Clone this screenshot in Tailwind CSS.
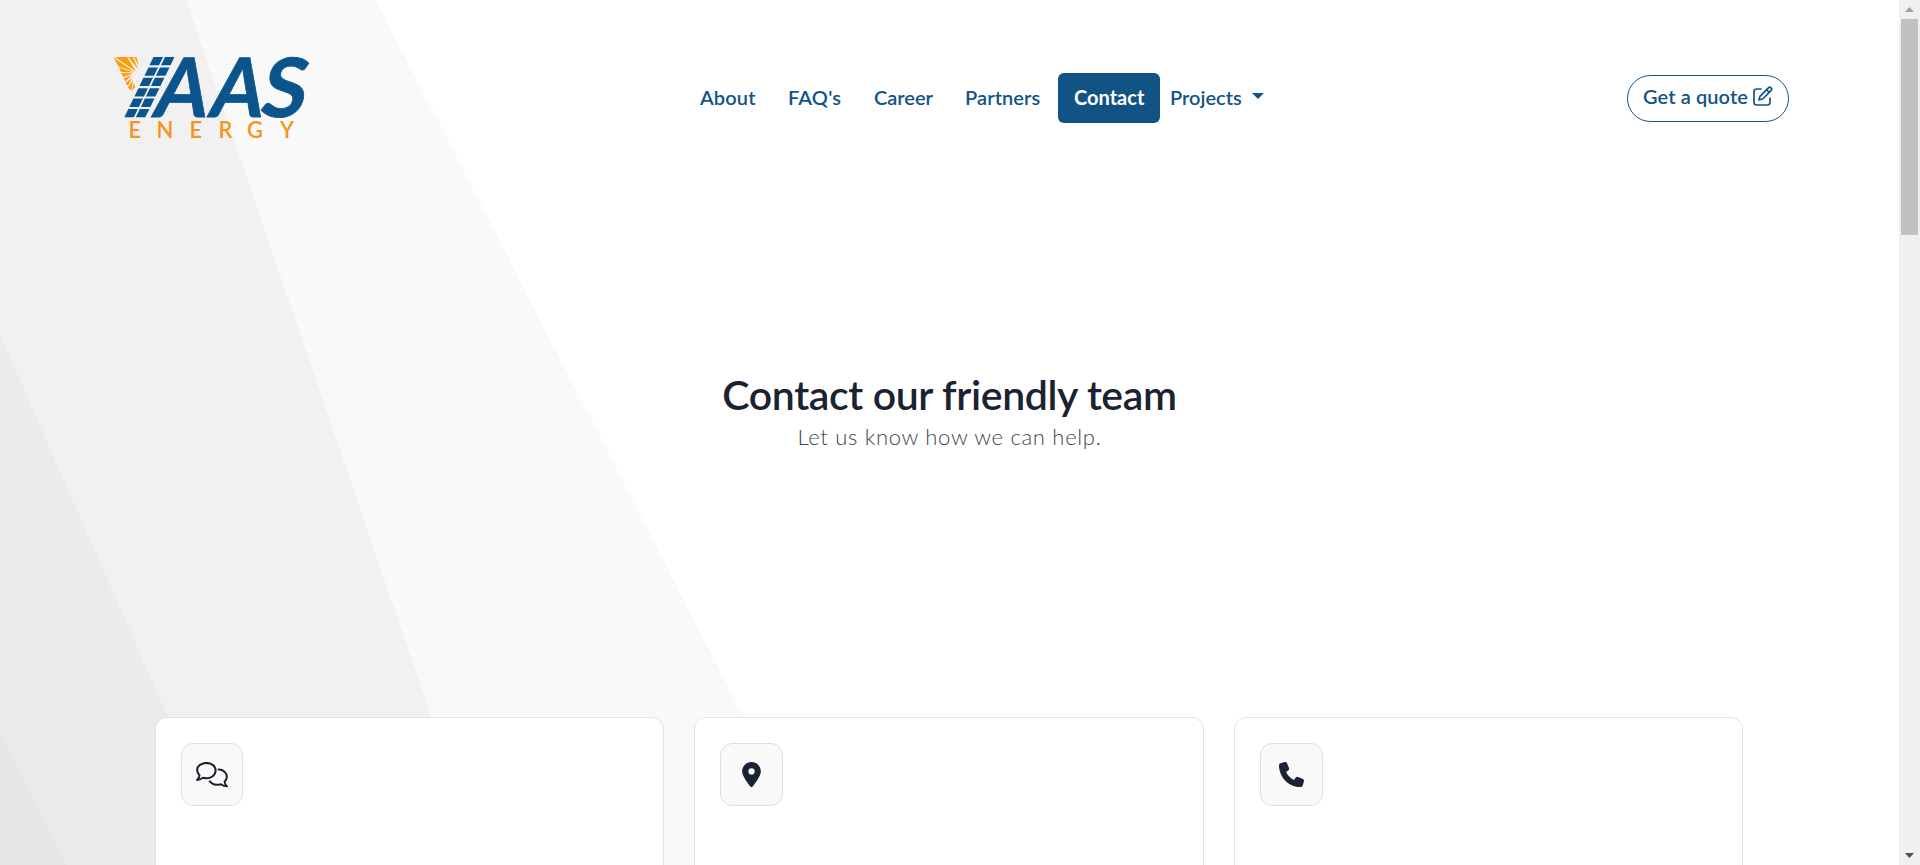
<!DOCTYPE html>
<html lang="en">
<head>
<meta charset="utf-8">
<title>YAAS Energy - Contact</title>
<script src="https://cdn.jsdelivr.net/npm/@tailwindcss/browser@4"></script>
</head>
<body class="flex h-[865px] w-[1920px] overflow-hidden bg-white font-[Lato,sans-serif]">
<div class="relative flex h-[865px] w-[1899px] flex-col overflow-hidden">
  <svg class="absolute inset-0 -z-10" width="1899" height="865" viewBox="0 0 1899 865">
    <path fill="#f9f9f9" d="M0 0H376L820 865H0z"/>
    <path fill="#f1f1f1" d="M0 0H186L482 865H0z"/>
    <path fill="#ebebeb" d="M0 335L233 865H0z"/>
    <path fill="#e5e5e5" d="M0 731L67 865H0z"/>
  </svg>

  <header class="flex h-[196px] items-center pr-[110px] pl-[110px]">
    <svg class="shrink-0" width="224" height="160" viewBox="110 18 224 160">
      <g fill="#fb9d0c">
        <path d="M128 57H133L138.500 69.500z"/>
        <path d="M115 57H127L136 71.500z"/>
        <path d="M113.500 57.500L134.500 72L118.500 66.500z"/>
        <path d="M119 67.500L133.500 72.500L121 72z"/>
        <path d="M121 73L133 73.500L123.500 77z"/>
        <path d="M123.500 78.500L132 75L125.500 81.500z"/>
        <path d="M125.500 83L132 77.500L128 86z"/>
        <path d="M128 87.500L133 80L131.500 91z"/>
        <path d="M132 90.500L134 83L135 87.500z"/>
        <path d="M134 57H136.500L139 66z"/>
      </g>
      <g fill="#0b558c" transform="translate(153.500 57) skewX(-25.8)">
        <path d="M0 0h9.500v8.300H0zM11.500 0h9.500v8.300h-9.500zM0 10.400h9.500v8.300H0zM11.500 10.400h9.500v8.300h-9.500zM0 20.800h9.500v8.300H0zM11.500 20.800h9.500v8.300h-9.500zM0 31.200h9.500v8.300H0zM11.500 31.200h9.500v8.300h-9.500zM0 41.600h9.500v8.300H0zM11.500 41.600h9.500v8.300h-9.500zM0 52h9.500v8.300H0zM11.500 52h9.500v8.300h-9.500z"/>
      </g>
      <g class="fill-[#0b558c] stroke-[#0b558c] stroke-[0.8px] font-[Lato,sans-serif] text-[82px] font-bold" transform="translate(0 117) skewX(-10.5)">
        <text transform="scale(.93 1)" x="162.900 222.800" y="-0.500">AA</text>
        <text x="258" y="-0.500">S</text>
      </g>
      <text x="128.500 156.500 189.500 218.500 247 280" y="137.600" class="fill-[#f7941e] font-[Lato,sans-serif] text-[22px] font-semibold">ENERGY</text>
    </svg>

    <nav class="ml-[350px] flex h-[50px] items-center text-[20px] leading-[48px] font-semibold whitespace-nowrap text-[#125386]">
      <a class="h-[50px] w-[72px] pl-4 tracking-[0.15px]">About</a>
      <a class="ml-4 h-[50px] w-[70px] pl-4 tracking-[0.2px]">FAQ's</a>
      <a class="ml-4 h-[50px] w-[75px] pl-4">Career</a>
      <a class="ml-4 h-[50px] w-[93px] pl-4 tracking-[0.1px]">Partners</a>
      <a class="ml-4 h-[50px] w-[102px] rounded-[6px] bg-[#125386] pl-4 font-bold text-white">Contact</a>
      <a class="ml-[10px] flex h-[50px] w-[94px] justify-between"><span>Projects</span><svg class="mt-5" width="12" height="6" viewBox="0 0 12 6"><path fill="#125386" d="M0 0h12L6 6z"/></svg></a>
    </nav>

    <a class="ml-auto flex h-[47px] w-[162px] items-center rounded-full border border-[#125386] bg-white pl-[15px] text-[20px] font-semibold whitespace-nowrap text-[#125386]">
      <span class="-mt-1 w-[110px] tracking-[0.1px]">Get a quote</span>
      <svg width="20" height="20" viewBox="0 0 20 20" fill="none" stroke="#125386" stroke-width="1.700" stroke-linecap="round" stroke-linejoin="round" class="-mt-1">
        <path d="M8 3H3.700Q1 3 1 5.700V16.300Q1 19 3.700 19H14.300Q17 19 17 16.300V12"/>
        <path d="M6 14L7 10.300L15.400 1.900Q16.700 .6 18 1.900Q19.400 3.300 18 4.600L9.700 13zM13.600 3.700L16.200 6.300"/>
      </svg>
    </a>
  </header>

  <main class="flex flex-1 flex-col">
    <div class="flex h-[521px] flex-col items-center pt-[171px]">
      <h1 class="text-[41px] leading-[56px] font-semibold tracking-[-0.38px] whitespace-nowrap text-[#1b2231]">Contact our friendly team</h1>
      <p class="text-[22px] leading-[27px] font-light tracking-[0.7px] whitespace-nowrap text-[#40484e]">Let us know how we can help.</p>
    </div>
    <div class="flex h-[148px] gap-[30px] overflow-hidden pl-[154.6px]">
      <section class="h-[220px] w-[509.6px] shrink-0 rounded-[12px] border border-[#e3e3e3] bg-white p-[25px]">
        <div class="flex h-[63px] w-[62px] items-center justify-center rounded-[12px] border border-[#dfdfdf] bg-[#f9f9f9]">
          <svg width="32" height="26" viewBox="0 0 32 26" fill="none" stroke="#1b2231" stroke-width="2" stroke-linecap="round" stroke-linejoin="round">
            <path d="M3.500 13.400C.2 10 .3 5.500 4 2.900C8 .2 13.300 .3 16.700 2.900C20.600 5.900 20.600 11.200 16.700 14.200C14 16.200 10.300 16.800 7 15.800C5 17.300 3 18 1 18C2.600 16.700 3.400 15.200 3.500 13.400z"/>
            <path d="M22.500 7.500C25.500 7.600 28.300 9 29.800 11.200C31.500 14 31 17 28.600 19.700C28.700 21.500 29.500 23 31 24.300C29 24.300 27 23.700 25 22.200C20.800 23.300 16 22.500 13.800 19.300"/>
          </svg>
        </div>
      </section>
      <section class="h-[220px] w-[509.6px] shrink-0 rounded-[12px] border border-[#e3e3e3] bg-white p-[25px]">
        <div class="flex h-[63px] w-[63px] items-center justify-center rounded-[12px] border border-[#dfdfdf] bg-[#f9f9f9]">
          <svg width="19" height="25" viewBox="0 0 384 512" fill="#1b2231"><path d="M215.700 499.200C267 435 384 279.400 384 192C384 86 298 0 192 0S0 86 0 192c0 87.400 117 243 168.300 307.200c12.300 15.300 35.100 15.300 47.400 0zM192 128a64 64 0 1 1 0 128a64 64 0 1 1 0-128z"/></svg>
        </div>
      </section>
      <section class="h-[220px] w-[509.6px] shrink-0 rounded-[12px] border border-[#e3e3e3] bg-white p-[25px]">
        <div class="flex h-[63px] w-[63px] items-center justify-center rounded-[12px] border border-[#dfdfdf] bg-[#f9f9f9]">
          <svg width="25" height="25" viewBox="0 0 512 512" fill="#1b2231"><path d="M164.900 24.600c-7.700-18.600-28-28.500-47.400-23.200l-88 24C12.100 30.200 0 46 0 64C0 311.400 200.600 512 448 512c18 0 33.800-12.100 38.600-29.500l24-88c5.300-19.400-4.600-39.700-23.200-47.400l-96-40c-16.300-6.800-35.200-2.100-46.300 11.600L304.700 368C234.300 334.700 177.300 277.700 144 207.300L193.300 167c13.700-11.200 18.400-30 11.600-46.300l-40-96z"/></svg>
        </div>
      </section>
    </div>
  </main>
</div>

<aside class="flex h-[865px] w-[21px] flex-col items-center bg-[#f0f0f0]">
  <svg class="mt-[7px]" width="9" height="5" viewBox="0 0 9 5"><path fill="#a3a3a3" d="M0 5h9L4.500 0z"/></svg>
  <div class="mt-[7px] h-[216px] w-[17px] bg-[#c1c1c1]"></div>
  <svg class="mt-auto mb-[7px]" width="9" height="5" viewBox="0 0 9 5"><path fill="#505050" d="M0 0h9L4.500 5z"/></svg>
</aside>
</body>
</html>
